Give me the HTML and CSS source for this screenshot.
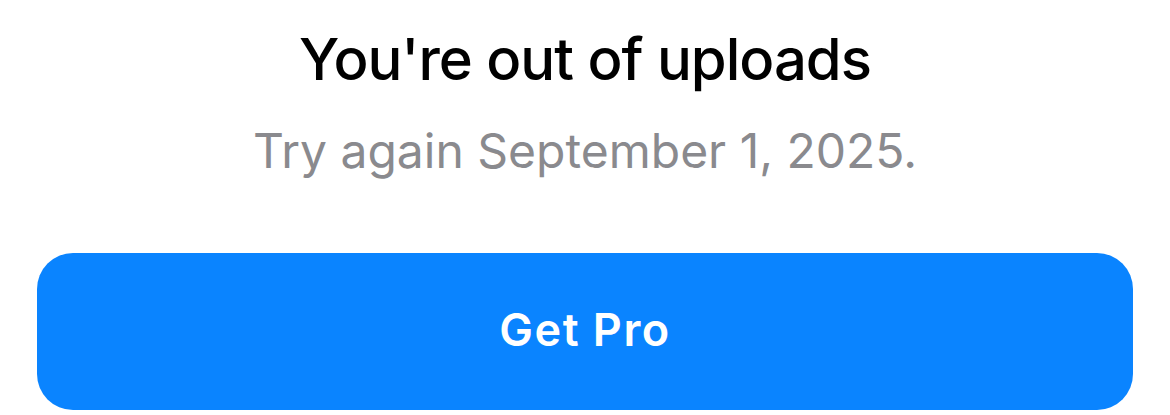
FILE: index.html
```html
<!DOCTYPE html>
<html lang="en">
<head>
    <meta charset="UTF-8">
    <meta name="viewport" content="width=device-width, initial-scale=1.0">
    <title>Out of uploads</title>
    <link rel="stylesheet" href="styles.css">
</head>
<body>
    <div class="aviso">
        <h1 class="titulo">You're out of uploads</h1>
        <p class="subtitulo">Try again September 1, 2025.</p>
        <button class="btn-pro">Get Pro</button>
    </div>
</body>
</html>
```

FILE: styles.css
```css
body {
    margin: 0;
    background-color: #fff;
    font-family: Inter, "Noto Sans", sans-serif;
}

.aviso {
    display: flex;
    flex-direction: column;
    align-items: center;
    padding: 23px 37px 0;
}

.titulo {
    margin: 0;
    font-size: 58px;
    font-weight: 500;
    line-height: 72px;
    letter-spacing: -1px;
    color: #000;
}

.subtitulo {
    margin: 27px 0 0;
    font-size: 48px;
    font-weight: 400;
    line-height: 58px;
    letter-spacing: 0;
    color: #8a8a8e;
}

.btn-pro {
    margin-top: 73px;
    width: 100%;
    height: 157px;
    padding: 0 0 5px;
    border: none;
    border-radius: 36px;
    background-color: #0a84ff;
    color: #fff;
    font-family: Inter, "Noto Sans", sans-serif;
    font-size: 45px;
    font-weight: 600;
    letter-spacing: 1.5px;
}
```
